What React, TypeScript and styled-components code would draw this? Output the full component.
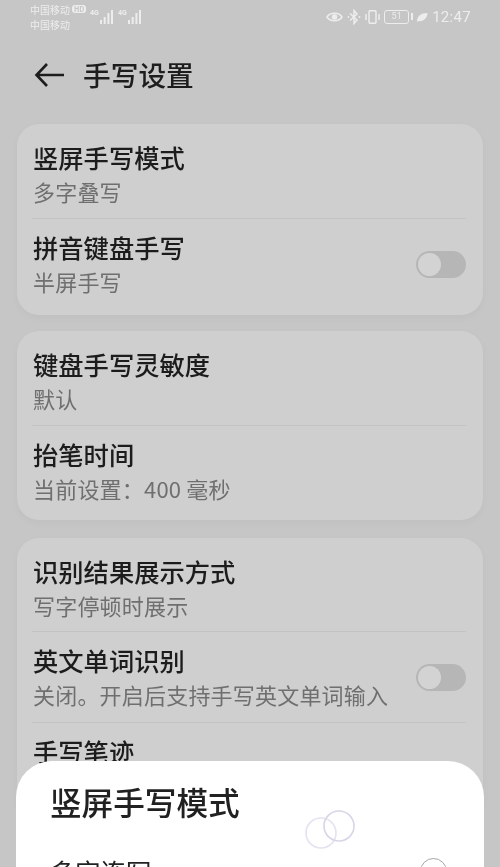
import React from 'react';
import styled, { createGlobalStyle } from 'styled-components';

const GlobalStyle = createGlobalStyle`
  html, body {
    margin: 0;
    padding: 0;
    background: #c4c4c4;
  }
  body {
    font-family: "Noto Sans CJK SC", "Noto Sans", sans-serif;
  }
`;

const Screen = styled.div`
  position: relative;
  width: 500px;
  height: 867px;
  overflow: hidden;
  background: #c6c6c7;
  filter: blur(0.4px);
`;

const StatusBar = styled.div`
  display: flex;
  justify-content: space-between;
  align-items: flex-start;
  height: 37px;
  padding: 3px 29px 0 30px;
  box-sizing: border-box;
  color: #ededed;
`;

const StatusLeft = styled.div`
  display: flex;
  gap: 4px;
`;

const Carriers = styled.div`
  display: flex;
  flex-direction: column;
  gap: 2px;
  width: 56px;
  font-size: 10px;
  line-height: 13px;
  white-space: nowrap;
`;

const HdBadge = styled.span`
  display: inline-block;
  margin-left: 2px;
  padding: 0 2px;
  border-radius: 3px;
  background: #ededed;
  color: #c6c6c7;
  font-size: 7px;
  line-height: 8px;
  font-weight: 700;
  vertical-align: 2px;
`;

const StatusRight = styled.div`
  display: flex;
  align-items: center;
  gap: 4px;
  height: 28px;
`;

const Clock = styled.span`
  font-family: "Roboto", sans-serif;
  font-size: 15px;
  letter-spacing: 0.3px;
`;

const Battery = styled.span`
  position: relative;
  width: 25px;
  height: 14px;
  margin-right: 3px;
  box-sizing: border-box;
  border: 1.5px solid #ededed;
  border-radius: 3px;
  font-family: "Roboto", sans-serif;
  font-size: 9px;
  line-height: 11px;
  text-align: center;

  &::after {
    content: '';
    position: absolute;
    right: -5px;
    top: 2px;
    width: 2px;
    height: 7px;
    background: #ededed;
  }
`;

const Header = styled.header`
  display: flex;
  align-items: center;
  gap: 19px;
  height: 76px;
  padding-left: 34px;
  box-sizing: border-box;
`;

const HeaderTitle = styled.h1`
  margin: -2px 0 0 -1px;
  font-size: 27.7px;
  line-height: 36px;
  font-weight: 500;
  color: #1d1d1d;
`;

const CardList = styled.main`
  display: flex;
  flex-direction: column;
  margin-top: 11px;
  padding: 0 17px;
`;

const Card = styled.section<{ $bottom: number; $gap: number }>`
  background: #cfcfcf;
  border-radius: 22px;
  padding: 5px 17px ${p => p.$bottom}px 15px;
  margin-bottom: ${p => p.$gap}px;
  box-shadow: 0 3px 8px rgba(0, 0, 0, 0.03);
`;

const Row = styled.div<{ $height: number; $divided?: boolean }>`
  display: flex;
  align-items: center;
  justify-content: space-between;
  height: ${p => p.$height}px;
  box-sizing: border-box;
  border-bottom: ${p => (p.$divided ? '1px solid #c3c3c3' : 'none')};
`;

const RowText = styled.div`
  display: flex;
  flex-direction: column;
  align-self: flex-start;
  gap: 7px;
  padding: 14px 0 0 1px;
`;

const RowTitle = styled.div`
  font-size: 25.3px;
  line-height: 29px;
  font-weight: 500;
  color: #1c1c1c;
`;

const RowSub = styled.div`
  font-size: 22px;
  line-height: 25px;
  letter-spacing: 0.2px;
  color: #6f6f6f;
`;

const Toggle = styled.div`
  position: relative;
  width: 50px;
  height: 27px;
  border-radius: 14px;
  background: #b6b6b6;
`;

const ToggleKnob = styled.span`
  position: absolute;
  left: 2px;
  top: 2px;
  width: 23px;
  height: 23px;
  border-radius: 50%;
  background: #d3d3d3;
`;

const Sheet = styled.div`
  position: absolute;
  left: 16px;
  right: 16px;
  top: 761px;
  height: 160px;
  background: #ffffff;
  border-radius: 36px 36px 0 0;
  padding: 19px 35px 0 34px;
  box-sizing: border-box;
`;

const SheetTitle = styled.h2`
  margin: 0;
  font-size: 31.6px;
  line-height: 42px;
  font-weight: 500;
  color: #212121;
`;

const SheetRow = styled.div`
  display: flex;
  justify-content: space-between;
  align-items: center;
  margin-top: 31px;
  padding-right: 2px;
`;

const SheetOption = styled.span`
  font-size: 25.3px;
  line-height: 36px;
  color: #222;
`;

const Radio = styled.span`
  width: 27px;
  height: 27px;
  box-sizing: border-box;
  border: 1.5px solid #a5a5a5;
  border-radius: 50%;
`;

const Spinner = styled.svg`
  position: absolute;
  left: 287px;
  top: 47px;
`;

const Signal = () => (
  <svg width="24" height="22" viewBox="0 0 24 22" fill="#ededed">
    <text x="0" y="12" fontSize="7" fontWeight="700" fontFamily="Roboto, sans-serif">4G</text>
    <rect x="10" y="17" width="2" height="4" />
    <rect x="13.7" y="14" width="2" height="7" />
    <rect x="17.4" y="10" width="2" height="11" />
    <rect x="21" y="7" width="2" height="14" />
  </svg>
);

const EyeIcon = () => (
  <svg width="17" height="12" viewBox="0 0 17 12">
    <path d="M1 6 C4 1 13 1 16 6 C13 11 4 11 1 6 Z" fill="none" stroke="#ededed" strokeWidth="1.5" />
    <circle cx="8.5" cy="6" r="2.8" fill="#ededed" />
  </svg>
);

const BluetoothIcon = () => (
  <svg width="14" height="16" viewBox="0 0 14 16" fill="none" stroke="#ededed" strokeWidth="1.5">
    <path d="M3 4.5 L10 11 L7 14.5 V1.5 L10 5 L3 11.5" />
    <circle cx="1.5" cy="8" r="0.9" fill="#ededed" stroke="none" />
    <circle cx="12.5" cy="8" r="0.9" fill="#ededed" stroke="none" />
  </svg>
);

const VibrateIcon = () => (
  <svg width="15" height="14" viewBox="0 0 15 14" fill="none" stroke="#ededed" strokeWidth="1.5">
    <rect x="4" y="0.7" width="7" height="12.6" rx="1.2" />
    <path d="M1 4 V10 M14 4 V10" />
  </svg>
);

const LeafIcon = () => (
  <svg width="12" height="11" viewBox="0 0 12 11">
    <path d="M1 10 C1 4 5 1 11.5 1 C11.5 6 7 10 2.5 9 Z" fill="#ededed" />
  </svg>
);

const BackArrow = () => (
  <svg width="31" height="26" viewBox="0 0 31 26" fill="none" stroke="#1d1d1d" strokeWidth="2.6">
    <path d="M30 13 H3 M13 2 L2.5 13 L13 24" />
  </svg>
);

const cards = [
  {
    bottom: 6,
    gap: 16,
    rows: [
      { title: '竖屏手写模式', sub: '多字叠写', height: 90 },
      { title: '拼音键盘手写', sub: '半屏手写', height: 90, toggle: true },
    ],
  },
  {
    bottom: 4,
    gap: 18,
    rows: [
      { title: '键盘手写灵敏度', sub: '默认', height: 90 },
      { title: '抬笔时间', sub: '当前设置：400 毫秒', height: 90 },
    ],
  },
  {
    bottom: 6,
    gap: 0,
    rows: [
      { title: '识别结果展示方式', sub: '写字停顿时展示', height: 89 },
      { title: '英文单词识别', sub: '关闭。开启后支持手写英文单词输入', height: 91, toggle: true },
      { title: '手写笔迹', sub: '', height: 90 },
    ],
  },
];

export default function App() {
  return (
    <Screen>
      <GlobalStyle />
      <StatusBar>
        <StatusLeft>
          <Carriers>
            <div>中国移动<HdBadge>HD</HdBadge></div>
            <div>中国移动</div>
          </Carriers>
          <Signal />
          <Signal />
        </StatusLeft>
        <StatusRight>
          <EyeIcon />
          <BluetoothIcon />
          <VibrateIcon />
          <Battery>51</Battery>
          <LeafIcon />
          <Clock>12:47</Clock>
        </StatusRight>
      </StatusBar>
      <Header>
        <BackArrow />
        <HeaderTitle>手写设置</HeaderTitle>
      </Header>
      <CardList>
        {cards.map((card, i) => (
          <Card key={i} $bottom={card.bottom} $gap={card.gap}>
            {card.rows.map((row, j) => (
              <Row key={row.title} $height={row.height} $divided={j < card.rows.length - 1}>
                <RowText>
                  <RowTitle>{row.title}</RowTitle>
                  {row.sub && <RowSub>{row.sub}</RowSub>}
                </RowText>
                {row.toggle && (
                  <Toggle>
                    <ToggleKnob />
                  </Toggle>
                )}
              </Row>
            ))}
          </Card>
        ))}
      </CardList>
      <Sheet>
        <SheetTitle>竖屏手写模式</SheetTitle>
        <SheetRow>
          <SheetOption>多字连写</SheetOption>
          <Radio />
        </SheetRow>
        <Spinner width="56" height="44" viewBox="0 0 56 44" fill="none" strokeWidth="1.6">
          <circle cx="18" cy="25" r="15" stroke="#e3e3f1" />
          <circle cx="36" cy="18" r="15" stroke="#d6d6e8" />
        </Spinner>
      </Sheet>
    </Screen>
  );
}
